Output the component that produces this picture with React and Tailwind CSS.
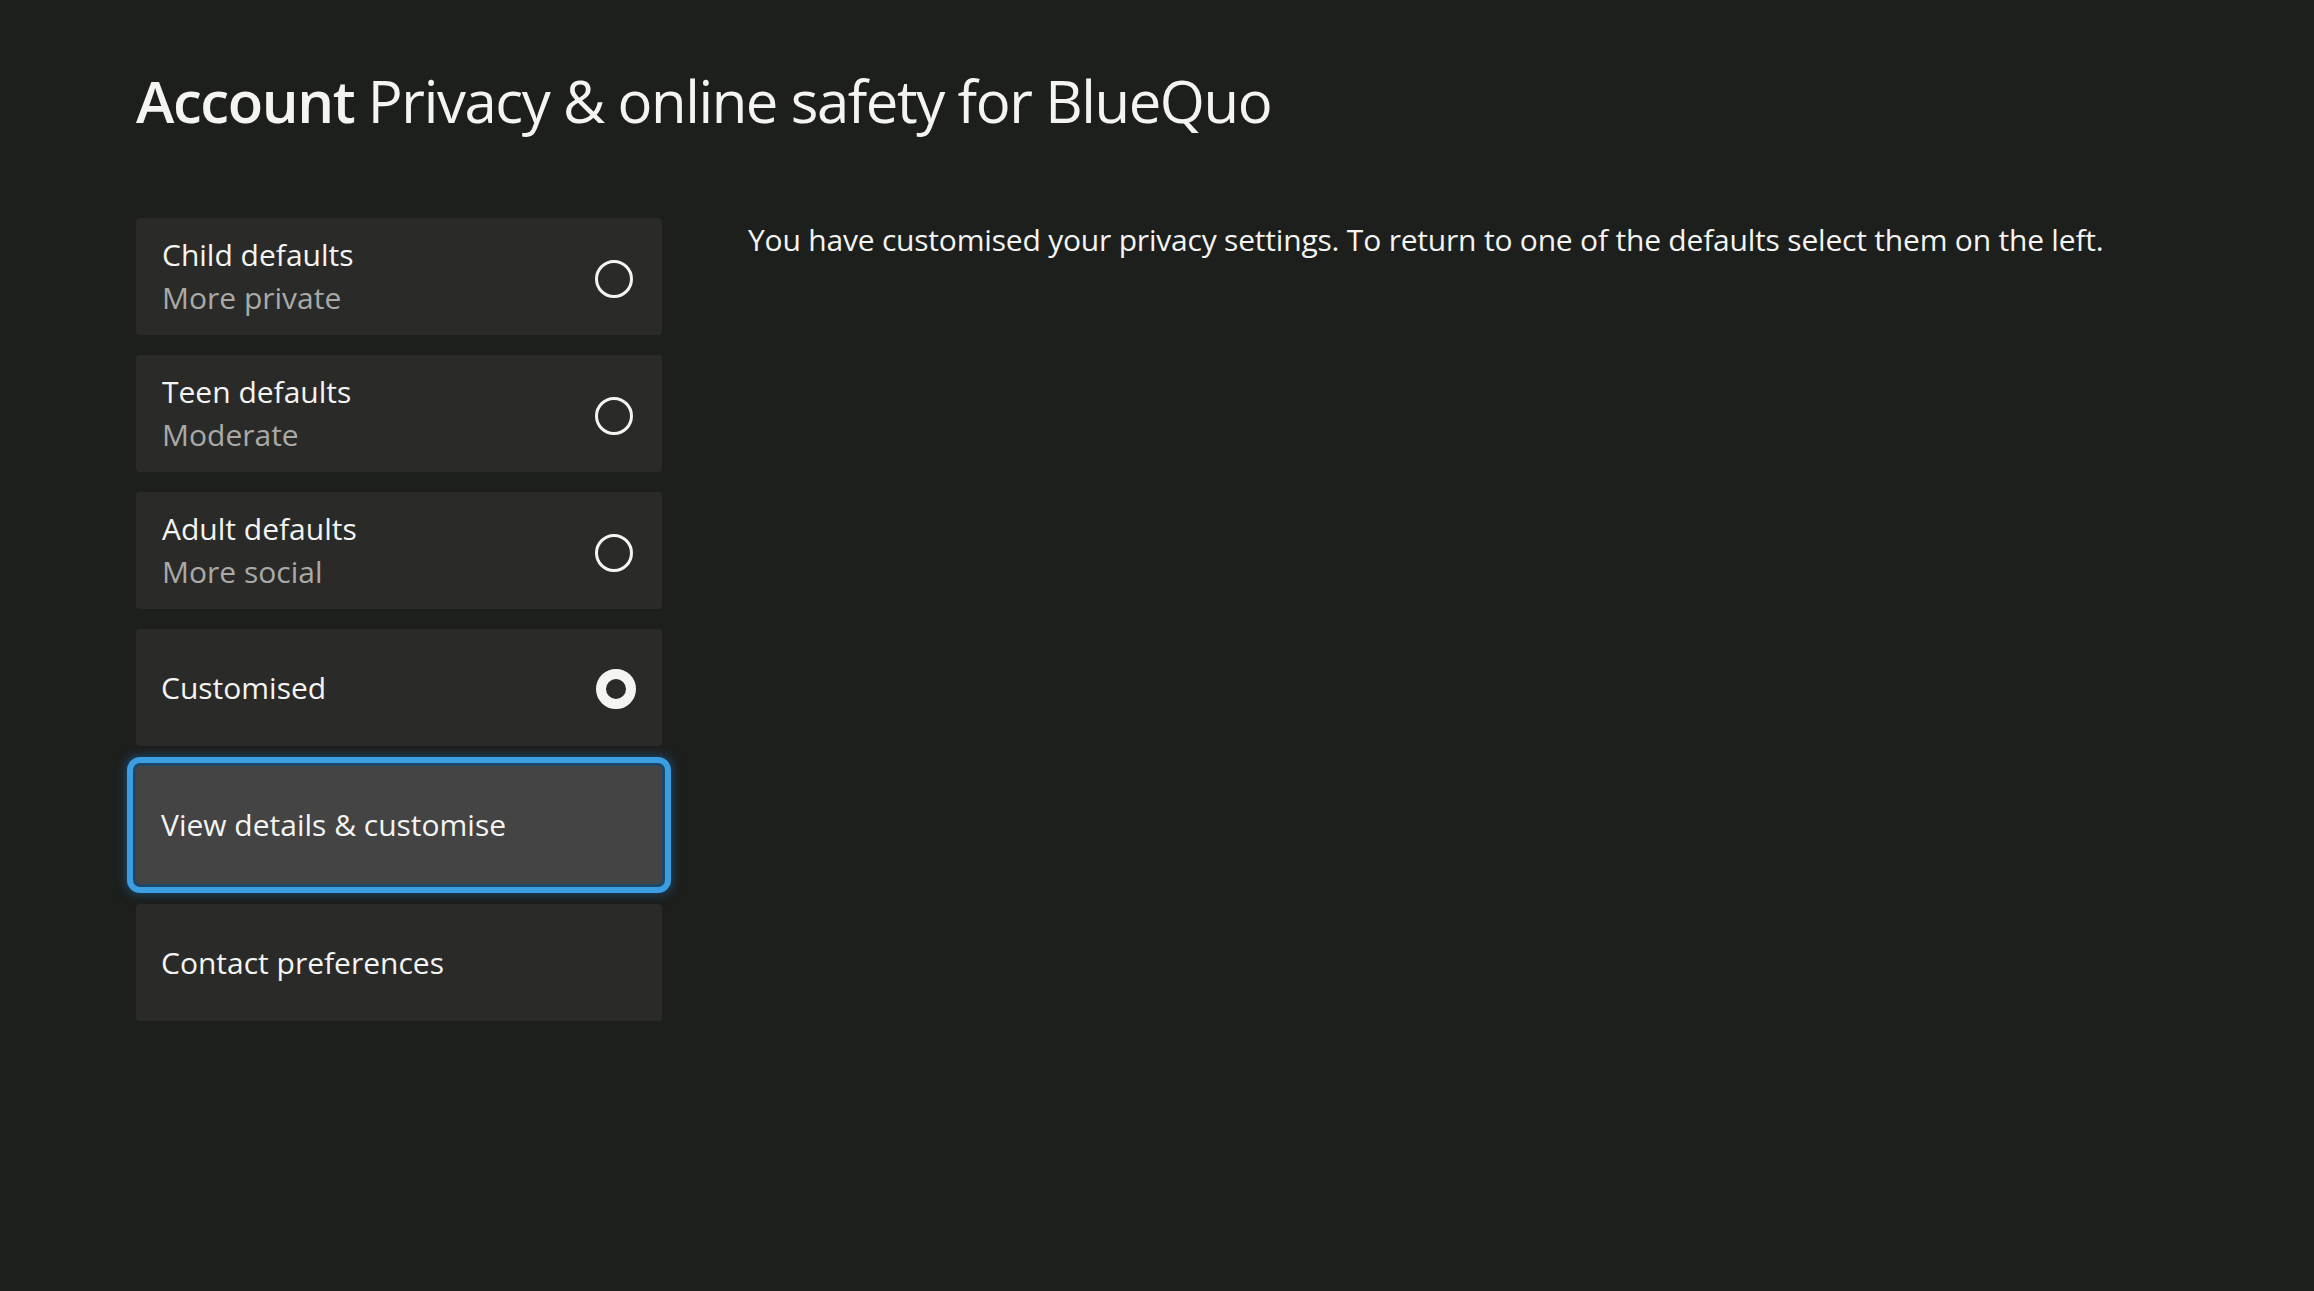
const options = [
  { title: 'Child defaults', sub: 'More private' },
  { title: 'Teen defaults', sub: 'Moderate' },
  { title: 'Adult defaults', sub: 'More social' },
];

function Radio({ checked }) {
  if (checked) {
    return <div className="w-[40px] h-[40px] mt-[3px] rounded-full border-[10px] border-[#f4f4f2]" />;
  }
  return <div className="w-[38px] h-[38px] mt-[6px] rounded-full border-[3px] border-[#f4f4f2]" />;
}

export default function App() {
  return (
    <div className="w-full h-[1291px] bg-[#1d1f1d] text-[#f4f4f2] font-['Open_Sans',sans-serif] pl-[136px] pt-[66px]">
      <h1 className="text-[58px] leading-[1.2] tracking-[-1.4px]">
        <span className="font-semibold">Account</span> Privacy &amp; online safety for BlueQuo
      </h1>

      <div className="flex mt-[82px]">
        <div className="w-[526px] flex flex-col gap-[20px]">
          {options.map(o => (
            <div key={o.title} className="h-[117px] rounded-[4px] bg-[#2a2b29] flex items-center justify-between pl-[26px] pr-[29px]">
              <div className="text-[30px] leading-[43px]">
                <div>{o.title}</div>
                <div className="text-[#a9aaa8]">{o.sub}</div>
              </div>
              <Radio />
            </div>
          ))}
          <div className="h-[117px] rounded-[4px] bg-[#2a2b29] flex items-center justify-between pl-[25px] pr-[26px]">
            <span className="text-[30px]">Customised</span>
            <Radio checked />
          </div>
          <div className="h-[118px] rounded-[4px] bg-[#434443] flex items-center pl-[25px] outline-[6px] outline-solid outline-[#3b9ee0] outline-offset-[3px] shadow-[0_0_10px_10px_rgba(30,115,190,0.5)]">
            <span className="text-[30px]">View details &amp; customise</span>
          </div>
          <div className="h-[117px] rounded-[4px] bg-[#2a2b29] flex items-center pl-[25px]">
            <span className="text-[30px]">Contact preferences</span>
          </div>
        </div>

        <div className="ml-[86px] pt-[2px]">
          <p className="text-[30px] leading-[40px] tracking-[-0.2px]">
            You have customised your privacy settings. To return to one of the defaults select them on the left.
          </p>
        </div>
      </div>
    </div>
  );
}
